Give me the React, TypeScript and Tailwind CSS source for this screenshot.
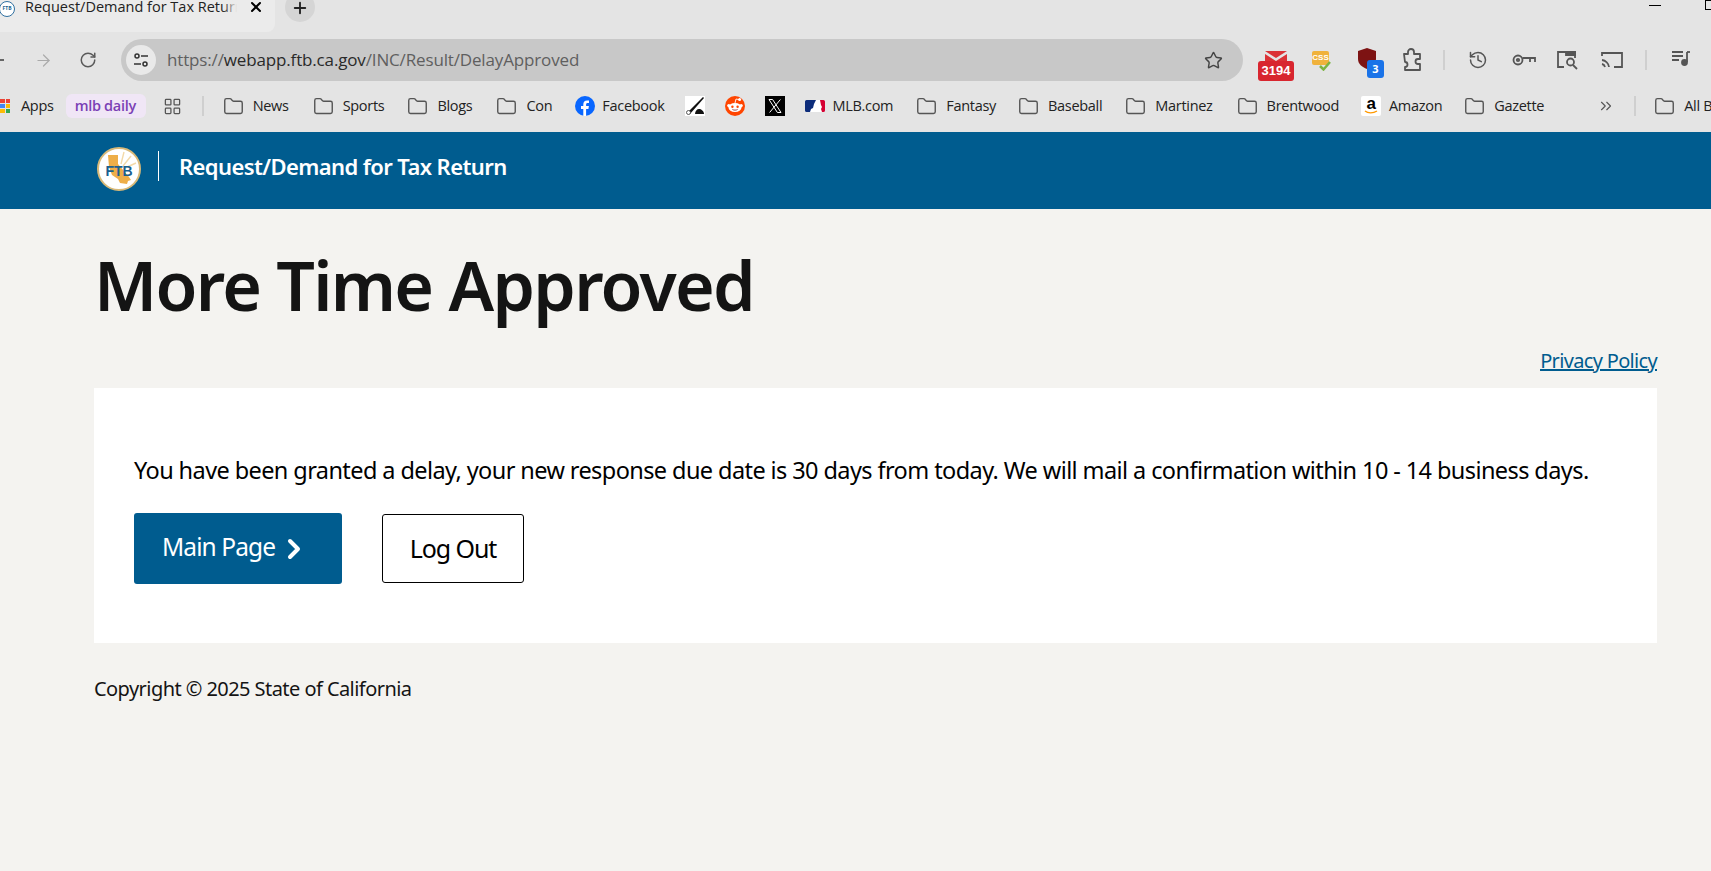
// src/App.tsx
import { ArrowRight, ChevronRight, ChevronsRight, Folder, History, LayoutGrid, Plus, RotateCw, Star, X } from "lucide-react";

const chromeFont = "font-['Open_Sans','Noto_Sans',sans-serif]";
const pageFont = "font-['Noto_Sans','Open_Sans',sans-serif]";

function BookmarkFolder({ label, className }: { label: string; className: string }) {
  return (
    <div className={`flex items-center gap-[9px] shrink-0 ${className}`}>
      <Folder size={21} strokeWidth={1.6} className="text-[#555]" />
      <span>{label}</span>
    </div>
  );
}

function FacebookIcon() {
  return (
    <svg width="20" height="20" viewBox="0 0 20 20">
      <circle cx="10" cy="10" r="10" fill="#0866ff" />
      <path d="M8.3 20v-7H6v-3h2.3V8.4c0-2.6 1.4-4 3.7-4 .9 0 1.7.1 2 .2V7h-1.3c-1.2 0-1.6.6-1.6 1.6V10h2.8l-.5 3h-2.3v7z" fill="#fff" />
    </svg>
  );
}

function PenIcon() {
  return (
    <svg width="20" height="20" viewBox="0 0 20 20">
      <rect width="20" height="20" fill="#fff" />
      <path d="M2 17 18 1l1 1L5 18z" fill="#111" />
      <path d="M10 18c0-3 2-5 4-5s5 2 5 5z" fill="#111" />
      <circle cx="3.5" cy="16.5" r="2" fill="#fff" stroke="#333" strokeWidth="0.8" />
    </svg>
  );
}

function RedditIcon() {
  return (
    <svg width="20" height="20" viewBox="0 0 20 20">
      <circle cx="10" cy="10" r="10" fill="#ff4500" />
      <ellipse cx="10" cy="11.5" rx="6.5" ry="4.6" fill="#fff" />
      <circle cx="3.8" cy="9.6" r="1.6" fill="#fff" />
      <circle cx="16.2" cy="9.6" r="1.6" fill="#fff" />
      <circle cx="14.6" cy="3.6" r="1.5" fill="#fff" />
      <path d="M10 7l1-4 3 .6" fill="none" stroke="#fff" strokeWidth="0.9" />
      <circle cx="7.4" cy="10.8" r="1.2" fill="#ff4500" />
      <circle cx="12.6" cy="10.8" r="1.2" fill="#ff4500" />
      <path d="M7.4 13.4c1.5 1 3.7 1 5.2 0" fill="none" stroke="#842123" strokeWidth="0.8" />
    </svg>
  );
}

function XIcon() {
  return (
    <svg width="20" height="20" viewBox="0 0 20 20">
      <rect width="20" height="20" fill="#000" />
      <path d="M4 3.5h3.6l8.4 13h-3.600zM15.400 3.500 4.600 16.500" fill="none" stroke="#fff" strokeWidth="1" />
    </svg>
  );
}

function MlbIcon() {
  return (
    <svg width="20" height="12" viewBox="0 0 20 12">
      <rect width="20" height="12" rx="1.500" fill="#fff" />
      <path d="M0 1.500A1.500 1.500 0 0 1 1.500 0H11L9 4 8 8l-2 1-1 3H1.500A1.500 1.500 0 0 1 0 10.500z" fill="#0d2c7a" />
      <path d="M15 0h3.500A1.500 1.500 0 0 1 20 1.500v9a1.500 1.500 0 0 1-1.500 1.500H17l-1-3 1-2-1-2z" fill="#d50032" />
    </svg>
  );
}

function AmazonIcon() {
  return (
    <div className="w-5 h-5 bg-white rounded-[2px] relative flex justify-center">
      <span className="font-['Liberation_Sans',sans-serif] font-bold text-[17px] leading-[15px] text-black">a</span>
      <svg width="14" height="5" viewBox="0 0 14 5" className="absolute bottom-[1px] left-[3px]">
        <path d="M1 1c3 2.500 8 2.500 12 0" fill="none" stroke="#f90" strokeWidth="1.400" />
      </svg>
    </div>
  );
}

function AppsDots() {
  const colors = ["bg-[#ea4335]", "bg-[#ea4335]", "bg-[#4285f4]", "bg-[#fbbc05]", "bg-[#fbbc05]", "bg-[#34a853]"];
  return (
    <div className="grid grid-cols-2 gap-[1px] w-[10px] shrink-0">
      {colors.map((c, i) => (
        <div key={i} className={`h-[4px] ${c}`} />
      ))}
    </div>
  );
}

function TabBar() {
  return (
    <div className="h-[32px] flex items-start bg-[#e4e4e4] relative overflow-hidden">
      <div className="w-[275px] h-[32px] bg-[#ebebeb] rounded-br-[8px] flex items-center relative">
        <div className="w-[16px] h-[16px] rounded-full bg-white border border-[#2f6f9f] ml-[-1px] mt-[-14px] text-[5px] font-bold text-[#1a5f8f] flex items-center justify-center">FTB</div>
        <div className="relative ml-[10px] mt-[-18px] w-[212px] overflow-hidden">
          <span className="text-[14.500px] text-[#222] whitespace-nowrap block">Request/Demand for Tax Return</span>
          <div className="absolute right-0 top-0 bottom-0 w-[14px] bg-gradient-to-r from-transparent to-[#ebebeb]" />
        </div>
        <X size={16} strokeWidth={3} className="absolute left-[248px] top-[-1px] text-black" />
      </div>
      <div className="w-[30px] h-[30px] rounded-full bg-[#d5d5d5] flex items-center justify-center ml-[10px] mt-[-8px]">
        <Plus size={18} strokeWidth={2.500} className="text-[#222] mt-[2px]" />
      </div>
      <div className="ml-auto w-[12px] h-[1px] bg-black mt-[5px] mr-[44px]" />
      <div className="w-[10px] h-[10px] border border-black mr-[-4px] mt-0" />
    </div>
  );
}

function ToolBar() {
  return (
    <div className="h-[56px] flex items-center bg-[#e4e4e4] relative">
      <div className="w-[4px] h-[1.500px] bg-[#666]" />
      <ArrowRight size={19} strokeWidth={1.500} className="ml-[30px] text-[#aaa]" />
      <RotateCw size={18} strokeWidth={2} className="ml-[26px] text-[#5a5a5a]" />
      <div className="ml-[24px] w-[1122px] h-[42px] rounded-full bg-[#c8c8c8] flex items-center pl-[5px] pr-[20px]">
        <div className="w-[30px] h-[30px] rounded-full bg-[#e9e9e9] flex items-center justify-center">
          <svg width="18" height="18" viewBox="0 0 18 18" fill="none" stroke="#333" strokeWidth="1.500">
            <circle cx="5" cy="5" r="2" />
            <path d="M9 5h7M2 13h7" />
            <circle cx="13" cy="13" r="2" />
          </svg>
        </div>
        <div className="ml-[11px] text-[17px] tracking-[-0.15px] text-[#5f5f5f] whitespace-nowrap">
          https://<span className="text-[#2a2a2a]">webapp.ftb.ca.gov</span>/INC/Result/DelayApproved
        </div>
        <Star size={19} strokeWidth={1.800} className="ml-auto text-[#444]" />
      </div>
      <div className="ml-[15px] relative w-[36px] h-[32px] mt-[14px]">
        <svg width="22" height="11" viewBox="0 0 22 11" className="absolute left-[7px] top-0">
          <path d="M0 0h22l-11 7z" fill="#db3236" />
          <path d="M0 3l11 7 11-7v7H0z" fill="#db3236" />
        </svg>
        <div className="absolute left-0 top-[10px] w-[36px] h-[20px] rounded-[3px] bg-[#d8262f] text-white text-[13px] leading-[20px] font-bold text-center font-['Liberation_Sans',sans-serif]">3194</div>
      </div>
      <div className="ml-[18px] relative w-[20px] h-[24px] mt-[5px]">
        <div className="absolute left-0 top-0 w-[17px] h-[14px] rounded-[2px] bg-[#f0b23c] text-white text-[8px] leading-[14px] font-bold text-center font-['Liberation_Sans',sans-serif]">CSS</div>
        <svg width="12" height="10" viewBox="0 0 12 10" className="absolute left-[7px] top-[10px]">
          <path d="M1 5l3.500 3.500L11 1" fill="none" stroke="#7cb342" strokeWidth="2.500" />
        </svg>
      </div>
      <div className="ml-[26px] relative w-[26px] h-[32px] mt-[8px]">
        <svg width="18" height="21" viewBox="0 0 18 21" className="absolute left-0 top-0">
          <path d="M9 0l9 3v8c0 5-4 8-9 10-5-2-9-5-9-10V3z" fill="#7d1313" />
        </svg>
        <div className="absolute left-[9px] top-[12px] w-[17px] h-[18px] rounded-[3px] bg-[#1a73e8] text-white text-[11px] leading-[18px] font-bold text-center">3</div>
      </div>
      <svg width="22" height="24" viewBox="0 0 22 24" fill="none" stroke="#555" strokeWidth="1.800" className="ml-[17px]">
        <path d="M3 6h4V4a3 3 0 0 1 6 0v2h6v5h-2a2.500 2.500 0 0 0 0 5h2v6H4v-3a2.500 2.500 0 0 0 0-5z" strokeLinejoin="round" />
      </svg>
      <div className="ml-[20px] w-[2px] h-[20px] bg-[#cfcfcf]" />
      <History size={20} strokeWidth={1.800} className="ml-[23px] text-[#555]" />
      <svg width="24" height="14" viewBox="0 0 24 14" fill="none" stroke="#555" strokeWidth="1.800" className="ml-[24px]">
        <circle cx="6" cy="7" r="4.500" />
        <circle cx="6" cy="7" r="1.200" />
        <path d="M10.500 5H23v4M18 5v4" />
      </svg>
      <svg width="24" height="22" viewBox="0 0 24 22" fill="none" stroke="#555" strokeWidth="1.800" className="ml-[20px]">
        <path d="M8 18H2V3h17v6" />
        <path d="M10 3h9v3h-9z" fill="#555" />
        <circle cx="14.500" cy="13" r="3.500" />
        <path d="M17 16l4 4" />
      </svg>
      <svg width="22" height="18" viewBox="0 0 22 18" fill="none" stroke="#555" strokeWidth="1.800" className="ml-[21px]">
        <path d="M1 5V2h20v14h-8" />
        <path d="M1 9a8 8 0 0 1 7 7M1 13a4 4 0 0 1 3 3" />
      </svg>
      <div className="ml-[22px] w-[2px] h-[20px] bg-[#cfcfcf]" />
      <svg width="20" height="16" viewBox="0 0 20 16" fill="none" stroke="#555" strokeWidth="1.800" className="ml-[24px] -mt-[4px]">
        <path d="M1 2h11M1 6h11M1 10h7M16 2v10" />
        <circle cx="13.500" cy="12.500" r="2.500" fill="#555" />
        <path d="M16 2h3" />
      </svg>
    </div>
  );
}

function BookmarksBar() {
  return (
    <div className={`h-[44px] pb-[8px] flex items-center bg-[#e4e4e4] text-[14.500px] tracking-[-0.3px] text-[#222] overflow-hidden whitespace-nowrap ${chromeFont}`}>
      <AppsDots />
      <span className="ml-[11px] shrink-0">Apps</span>
      <div className="ml-[12px] h-[24px] pl-[9px] w-[80px] rounded-[6px] bg-[#f0e6f6] text-[#7b3fb5] font-semibold flex items-center shrink-0">mlb daily</div>
      <LayoutGrid size={19} strokeWidth={1.600} className="ml-[17px] text-[#555] shrink-0" />
      <div className="ml-[20px] w-[2px] h-[20px] bg-[#cfcfcf] shrink-0" />
      <BookmarkFolder label="News" className="ml-[19px]" />
      <BookmarkFolder label="Sports" className="ml-[24px]" />
      <BookmarkFolder label="Blogs" className="ml-[23px]" />
      <BookmarkFolder label="Con" className="ml-[24px]" />
      <div className="ml-[23px] shrink-0"><FacebookIcon /></div>
      <span className="ml-[7px] shrink-0">Facebook</span>
      <div className="ml-[21px] shrink-0"><PenIcon /></div>
      <div className="ml-[20px] shrink-0"><RedditIcon /></div>
      <div className="ml-[20px] shrink-0"><XIcon /></div>
      <div className="ml-[20px] shrink-0"><MlbIcon /></div>
      <span className="ml-[7px] shrink-0">MLB.com</span>
      <BookmarkFolder label="Fantasy" className="ml-[23px]" />
      <BookmarkFolder label="Baseball" className="ml-[22px]" />
      <BookmarkFolder label="Martinez" className="ml-[23px]" />
      <BookmarkFolder label="Brentwood" className="ml-[24px]" />
      <div className="ml-[22px] shrink-0"><AmazonIcon /></div>
      <span className="ml-[8px] shrink-0">Amazon</span>
      <BookmarkFolder label="Gazette" className="ml-[22px]" />
      <ChevronsRight size={18} strokeWidth={1.500} className="ml-[53px] text-[#555] shrink-0" />
      <div className="ml-[19px] w-[2px] h-[20px] bg-[#cfcfcf] shrink-0" />
      <BookmarkFolder label="All Bookmarks" className="ml-[18px]" />
    </div>
  );
}

function FtbLogo() {
  return (
    <svg width="44" height="44" viewBox="0 0 44 44">
      <circle cx="22" cy="22" r="21" fill="#fff" stroke="#d8b978" strokeWidth="2" />
      <path d="M24 17 27 5M26 19l8-10M28 21l11-5" stroke="#f3d9a8" strokeWidth="1.400" />
      <path d="M11 8h10v9l11 13 2 3-3 1-1 3-7-1-2-4-6-4-3-8z" fill="#eeae48" />
      <text x="22" y="29" textAnchor="middle" fontSize="14" fontWeight="700" fill="#1a5f8f" fontFamily="Liberation Sans, sans-serif">FTB</text>
    </svg>
  );
}

export default function App() {
  return (
    <div className="h-screen overflow-hidden bg-[#f4f3f0] flex flex-col">
      <div className={chromeFont}>
        <TabBar />
        <ToolBar />
      </div>
      <BookmarksBar />

      <div className={`flex-1 ${pageFont}`}>
        {/* Header */}
        <header className="h-[77px] bg-[#005c8f] flex items-center pl-[97px] pb-[4px] text-white">
          <FtbLogo />
          <div className="ml-[17px] mb-[5px] w-[1px] h-[30px] bg-white" />
          <h2 className="ml-[20px] mb-[4px] text-[22px] font-semibold tracking-[-0.6px]">Request/Demand for Tax Return</h2>
        </header>

        <main className="px-[94px] pr-[54px]">
          <h1 className="mt-[40px] text-[68px] leading-[72px] font-semibold tracking-[-1.700px] text-[#141414]">More Time Approved</h1>

          <div className="mt-[26px] text-right text-[20px] leading-[28px] tracking-[-0.67px] text-[#005c8f] underline">
            <a href="#">Privacy Policy</a>
          </div>

          <section className="mt-[13px] h-[255px] bg-white pl-[40px] pt-[66px]">
            <p className="text-[23.500px] leading-[32px] tracking-[-0.59px] text-black">
              You have been granted a delay, your new response due date is 30 days from today. We will mail a confirmation within 10 - 14 business days.
            </p>
            <div className="mt-[27px] flex items-center gap-[40px]">
              <button className="w-[208px] h-[71px] rounded-[3px] bg-[#005c8f] text-white text-[24.500px] tracking-[-0.9px] flex items-center pl-[28px] pb-[3px]">
                Main Page
                <ChevronRight size={32} strokeWidth={3} className="ml-[3px] mt-[4px]" />
              </button>
              <button className="w-[142px] h-[69px] rounded-[3px] border border-black bg-white text-black text-[25px] tracking-[-1.100px]">
                Log Out
              </button>
            </div>
          </section>

          <p className="mt-[32px] text-[20px] leading-[28px] tracking-[-0.56px] text-[#141414]">Copyright © 2025 State of California</p>
        </main>
      </div>
    </div>
  );
}
